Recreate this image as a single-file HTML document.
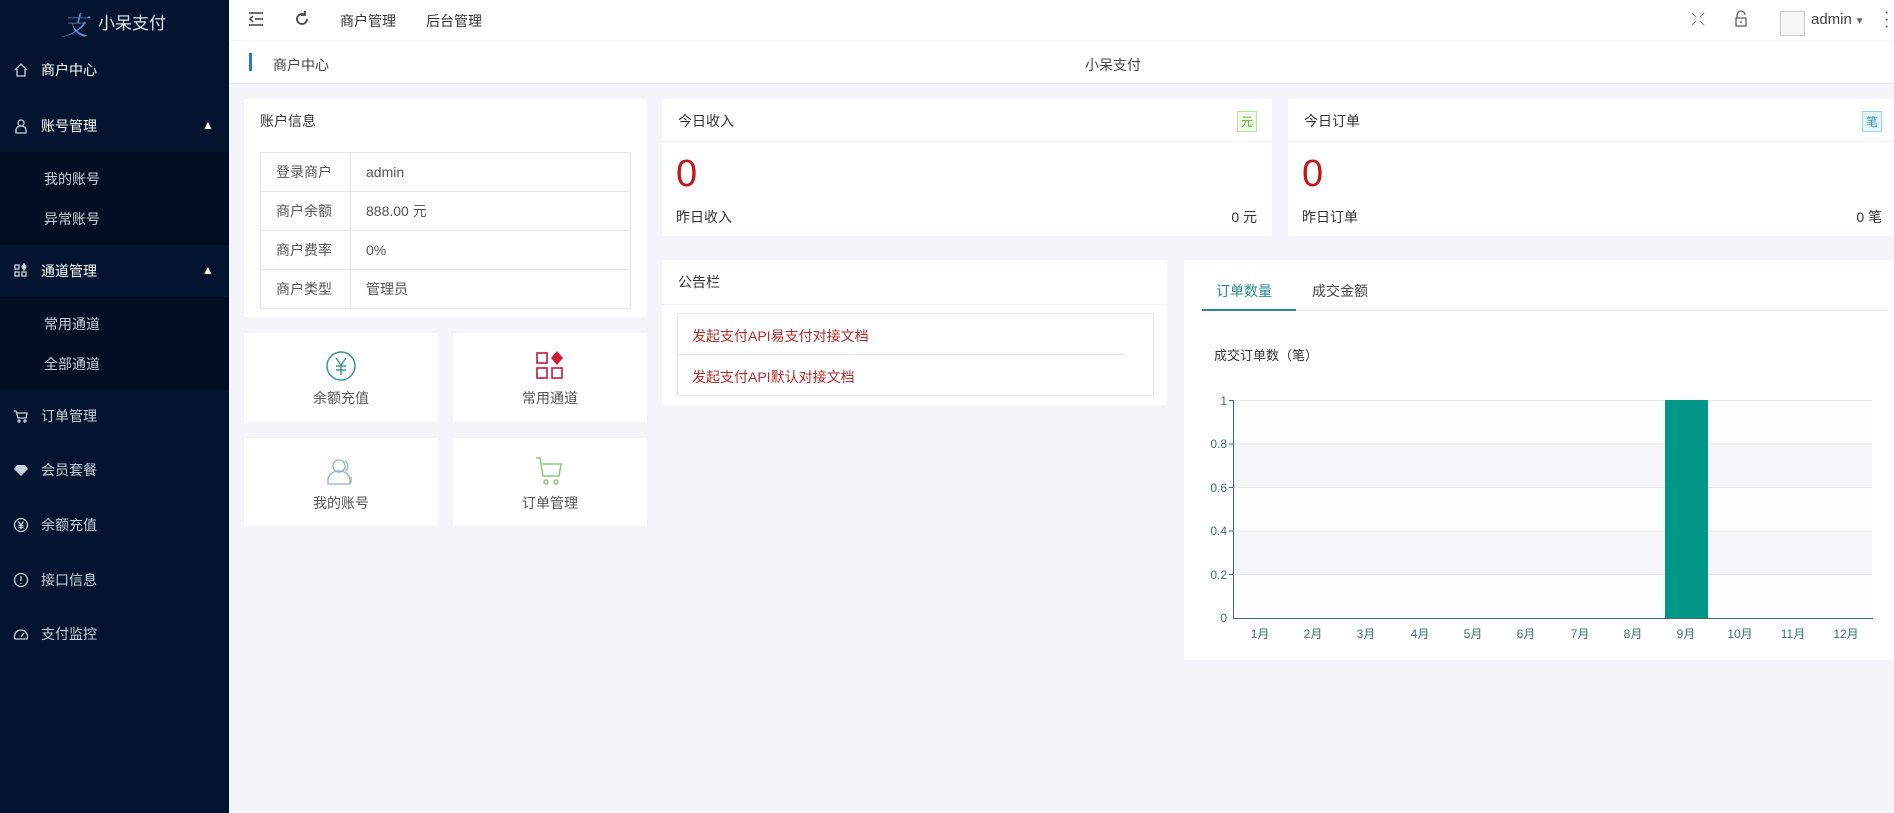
<!DOCTYPE html>
<html><head><meta charset="utf-8"><style>
*{margin:0;padding:0;box-sizing:border-box}
body{width:1894px;height:813px;overflow:hidden;background:#f4f5f9;font-family:"Liberation Sans","Noto Sans CJK SC",sans-serif;font-size:14px;color:#333;position:relative}
.abs{position:absolute}
#side{left:0;top:0;width:229px;height:813px;background:#03152e;color:#c9d1dc}
.mi{position:absolute;left:0;width:229px;height:20px;line-height:20px;font-size:14px}
.mi .ic{position:absolute;left:13px;top:2px;width:16px;height:16px}
.mi .t{position:absolute;left:41px}
.sub{position:absolute;left:0;width:229px;background:#020f22}
.sub div{position:absolute;left:44px;font-size:14px;color:#c9d1dc}
.card{position:absolute;background:#fff;border-radius:2px}
.ttl{position:absolute;left:16px;top:12px;font-size:14px;color:#333}
.sep{position:absolute;left:0;right:0;top:42px;height:1px;background:#f4f4f4}
table{border-collapse:collapse;position:absolute}
td{border:1px solid #e6e6e6;height:39px;padding-left:15px;font-size:14px;color:#555}
.big{position:absolute;left:14px;top:54px;font-size:38px;color:#c0171d}
.qk{position:absolute;background:#fff;text-align:center;font-size:14px;color:#555}
.ax{font-size:12px;fill:#3f6f69;font-family:"Liberation Sans","Noto Sans CJK SC",sans-serif}
</style></head><body>
<div id="side" class="abs">
 <div class="abs" style="left:62px;top:6px;font-size:26px;color:#5b8ac8;font-family:'Noto Serif CJK SC',serif;font-style:italic">支</div>
 <div class="abs" style="left:98px;top:9px;font-size:17px;color:#dfe6ee">小呆支付</div>
 <div class="mi" style="top:60px"><svg class="ic" viewBox="0 0 16 16" fill="none" stroke="#c9d1dc" stroke-width="1.3"><path d="M2 8L8 2l6 6M4 7v7h8V7"/></svg><span class="t" style="color:#fff">商户中心</span></div>
 <div class="mi" style="top:116px"><svg class="ic" viewBox="0 0 16 16" fill="none" stroke="#c9d1dc" stroke-width="1.3"><circle cx="8" cy="5" r="3"/><path d="M3 15v-3a5 4 0 0 1 10 0v3z"/></svg><span class="t" style="color:#fff">账号管理</span><span class="abs" style="left:202px;top:-1px;font-size:12px;color:#fff">▲</span></div>
 <div class="sub" style="top:152px;height:93px"><div style="top:17px">我的账号</div><div style="top:57px">异常账号</div></div>
 <div class="mi" style="top:261px"><svg class="ic" viewBox="0 0 16 16" fill="none" stroke="#c9d1dc" stroke-width="1.3"><rect x="2" y="2" width="4" height="4"/><rect x="2" y="9" width="4" height="4"/><rect x="9" y="9" width="4" height="4"/><path d="M11 1l2 3-2 3-2-3z" fill="#c9d1dc"/></svg><span class="t" style="color:#fff">通道管理</span><span class="abs" style="left:202px;top:-1px;font-size:12px;color:#fff">▲</span></div>
 <div class="sub" style="top:297px;height:93px"><div style="top:17px">常用通道</div><div style="top:57px">全部通道</div></div>
 <div class="mi" style="top:406px"><svg class="ic" viewBox="0 0 16 16" fill="none" stroke="#c9d1dc" stroke-width="1.3"><path d="M1 3h2l2 7h8l1-5H4"/><circle cx="6" cy="13" r="1"/><circle cx="12" cy="13" r="1"/></svg><span class="t">订单管理</span></div>
 <div class="mi" style="top:460px"><svg class="ic" viewBox="0 0 16 16" fill="#c9d1dc"><path d="M4 3h8l3 4-7 7-7-7z"/></svg><span class="t">会员套餐</span></div>
 <div class="mi" style="top:515px"><svg class="ic" viewBox="0 0 16 16" fill="none" stroke="#c9d1dc" stroke-width="1.3"><circle cx="8" cy="8" r="6.5"/><path d="M5.5 4.5L8 8l2.5-3.5M8 8v4M5.5 8.5h5M5.5 10.5h5"/></svg><span class="t">余额充值</span></div>
 <div class="mi" style="top:570px"><svg class="ic" viewBox="0 0 16 16" fill="none" stroke="#c9d1dc" stroke-width="1.3"><circle cx="8" cy="8" r="6.5"/><path d="M8 4v5M8 11v1"/></svg><span class="t">接口信息</span></div>
 <div class="mi" style="top:624px"><svg class="ic" viewBox="0 0 16 16" fill="none" stroke="#c9d1dc" stroke-width="1.3"><path d="M2 13a6.5 6.5 0 1 1 12 0z"/><path d="M8 11l3-4"/></svg><span class="t">支付监控</span></div>
</div>
<div class="abs" style="left:229px;top:0;width:1665px;height:40px;background:#fff"></div>
<svg class="abs" style="left:247px;top:11px" width="18" height="16" viewBox="0 0 18 16" fill="none" stroke="#444" stroke-width="1.5"><path d="M2 2h14M8 8h8M2 14h14M6 5L3 8l3 3"/></svg>
<svg class="abs" style="left:293px;top:10px" width="18" height="18" viewBox="0 0 18 18" fill="none" stroke="#444" stroke-width="1.8"><path d="M14 9a5 5 0 1 1-2-4"/><path d="M12 1v4h-4" /></svg>
<div class="abs" style="left:340px;top:11px;font-size:14px;color:#333">商户管理</div>
<div class="abs" style="left:426px;top:11px;font-size:14px;color:#333">后台管理</div>
<svg class="abs" style="left:1690px;top:11px" width="16" height="16" viewBox="0 0 16 16" fill="none" stroke="#888" stroke-width="1.1"><path d="M2 2l4 4M14 2l-4 4M2 14l4-4M14 14l-4-4"/></svg>
<svg class="abs" style="left:1734px;top:10px" width="14" height="18" viewBox="0 0 14 18" fill="none" stroke="#555" stroke-width="1.2"><path d="M3 8V5a4 4 0 0 1 8 0"/><rect x="2" y="8" width="10" height="8"/><path d="M7 11v2"/></svg>
<div class="abs" style="left:1780px;top:11px;width:25px;height:25px;border:1px solid #ccc;background:#f6f6f6"></div>
<div class="abs" style="left:1811px;top:11px;font-size:15px;color:#444">admin<span style="font-size:10px;color:#666"> ▼</span></div>
<div class="abs" style="left:1884px;top:9px;font-size:16px;color:#444;line-height:7px">·<br>·<br>·</div>
<div class="abs" style="left:229px;top:41px;width:1665px;height:43px;background:#fff;border-bottom:1px solid #e8e8e8"></div>
<div class="abs" style="left:249px;top:53px;width:3px;height:18px;background:#2c78b8"></div>
<div class="abs" style="left:273px;top:55px;font-size:14px;color:#444">商户中心</div>
<div class="abs" style="left:1085px;top:55px;font-size:14px;color:#444">小呆支付</div>
<div class="card" style="left:244px;top:99px;width:403px;height:218px">
 <div class="ttl">账户信息</div>
 <table style="left:16px;top:53px;width:371px"><tr><td style="width:90px">登录商户</td><td>admin</td></tr><tr><td>商户余额</td><td>888.00 元</td></tr><tr><td>商户费率</td><td>0%</td></tr><tr><td>商户类型</td><td>管理员</td></tr></table>
</div>
<div class="card" style="left:662px;top:99px;width:610px;height:137px">
 <div class="ttl">今日收入</div><div class="sep"></div>
 <div class="abs" style="right:15px;top:12px;border:1px solid #b7e29a;background:#f2fbe9;color:#5fb336;font-size:12px;padding:1px 3px">元</div>
 <div class="big">0</div>
 <div class="abs" style="left:14px;top:108px">昨日收入</div><div class="abs" style="right:15px;top:108px">0 元</div>
</div>
<div class="card" style="left:1288px;top:99px;width:606px;height:137px">
 <div class="ttl">今日订单</div><div class="sep"></div>
 <div class="abs" style="right:12px;top:12px;border:1px solid #9ad4ea;background:#e9f7fc;color:#2a9bc7;font-size:12px;padding:1px 3px">笔</div>
 <div class="big">0</div>
 <div class="abs" style="left:14px;top:108px">昨日订单</div><div class="abs" style="right:12px;top:108px">0 笔</div>
</div>
<div class="qk" style="left:244px;top:333px;width:194px;height:89px"><svg class="abs" style="left:81px;top:17px" width="32" height="32" viewBox="0 0 32 32" fill="none" stroke="#3a9690" stroke-width="1.5"><circle cx="16" cy="16" r="14"/><path d="M11 8l5 7 5-7M16 15v10M11 16h10M11 20h10"/></svg><div class="abs" style="left:0;right:0;top:55px">余额充值</div></div>
<div class="qk" style="left:453px;top:333px;width:194px;height:89px"><svg class="abs" style="left:81px;top:17px" width="32" height="32" viewBox="0 0 32 32" fill="none" stroke="#c4173e" stroke-width="1.6"><rect x="3" y="3" width="10" height="10"/><rect x="3" y="18" width="10" height="10"/><rect x="18" y="18" width="10" height="10"/><path d="M23 1l6 7-6 7-6-7z" fill="#d11a3c" stroke="none"/></svg><div class="abs" style="left:0;right:0;top:55px">常用通道</div></div>
<div class="qk" style="left:244px;top:438px;width:194px;height:88px"><svg class="abs" style="left:81px;top:18px" width="32" height="32" viewBox="0 0 32 32" fill="none" stroke="#8fb0cf" stroke-width="1.3"><circle cx="14" cy="10" r="6"/><path d="M3 28v-4a11 9 0 0 1 22 0v4z"/><path d="M20 5a6 6 0 0 1 0 10M26 21v6"/></svg><div class="abs" style="left:0;right:0;top:55px">我的账号</div></div>
<div class="qk" style="left:453px;top:438px;width:194px;height:88px"><svg class="abs" style="left:81px;top:18px" width="32" height="32" viewBox="0 0 32 32" fill="none" stroke="#8cc97a" stroke-width="1.5"><path d="M2 2h4l3 18h16l2-12H8"/><circle cx="12" cy="26" r="2"/><circle cx="22" cy="26" r="2"/></svg><div class="abs" style="left:0;right:0;top:55px">订单管理</div></div>
<div class="card" style="left:662px;top:260px;width:505px;height:145px">
 <div class="ttl">公告栏</div><div class="sep" style="top:44px"></div>
 <div class="abs" style="left:15px;top:53px;width:477px;height:83px;border:1px solid #e6e6e6"></div>
 <div class="abs" style="left:15px;top:94px;width:448px;height:1px;background:#e6e6e6"></div>
 <div class="abs" style="left:30px;top:66px;color:#b52a2a">发起支付API易支付对接文档</div>
 <div class="abs" style="left:30px;top:107px;color:#b52a2a">发起支付API默认对接文档</div>
</div>
<div class="card" style="left:1184px;top:260px;width:710px;height:400px">
 <div class="abs" style="left:32px;top:21px;font-size:14px;color:#2a8a93">订单数量</div>
 <div class="abs" style="left:128px;top:21px;font-size:14px;color:#444">成交金额</div>
 <div class="abs" style="left:18px;top:50px;width:686px;height:1px;background:#e4e4e4"></div>
 <div class="abs" style="left:18px;top:49px;width:94px;height:2px;background:#2a8a93"></div>
 <div class="abs" style="left:30px;top:85px;font-size:13px;color:#333">成交订单数（笔）</div>
</div>
<svg class="abs" style="left:1184px;top:380px" width="710" height="280">
 <rect x="49" y="20" width="639" height="43.6" fill="#fdfdfe"/>
 <rect x="49" y="63.6" width="639" height="43.6" fill="#f6f6f8"/>
 <rect x="49" y="107.2" width="639" height="43.6" fill="#fdfdfe"/>
 <rect x="49" y="150.8" width="639" height="43.6" fill="#f6f6f8"/>
 <rect x="49" y="194.4" width="639" height="43.6" fill="#fdfdfe"/>
 <g stroke="#e6e6e6"><line x1="49" x2="688" y1="20.5" y2="20.5"/><line x1="49" x2="688" y1="64" y2="64"/><line x1="49" x2="688" y1="107.5" y2="107.5"/><line x1="49" x2="688" y1="151" y2="151"/><line x1="49" x2="688" y1="194.5" y2="194.5"/></g>
 <rect x="481" y="20" width="43" height="218" fill="#009688"/>
 <g stroke="#3f6f69"><line x1="49.5" x2="49.5" y1="20" y2="238"/><line x1="49" x2="689" y1="238.5" y2="238.5"/><line x1="45" x2="49" y1="20.5" y2="20.5"/><line x1="45" x2="49" y1="64" y2="64"/><line x1="45" x2="49" y1="107.5" y2="107.5"/><line x1="45" x2="49" y1="151" y2="151"/><line x1="45" x2="49" y1="194.5" y2="194.5"/></g>
 <g class="ax" text-anchor="end"><text x="43" y="25">1</text><text x="43" y="68">0.8</text><text x="43" y="112">0.6</text><text x="43" y="155">0.4</text><text x="43" y="199">0.2</text><text x="43" y="242">0</text></g>
 <g class="ax" text-anchor="middle"><text x="76" y="258">1月</text><text x="129" y="258">2月</text><text x="182" y="258">3月</text><text x="236" y="258">4月</text><text x="289" y="258">5月</text><text x="342" y="258">6月</text><text x="396" y="258">7月</text><text x="449" y="258">8月</text><text x="502" y="258">9月</text><text x="556" y="258">10月</text><text x="609" y="258">11月</text><text x="662" y="258">12月</text></g>
</svg>
</body></html>
